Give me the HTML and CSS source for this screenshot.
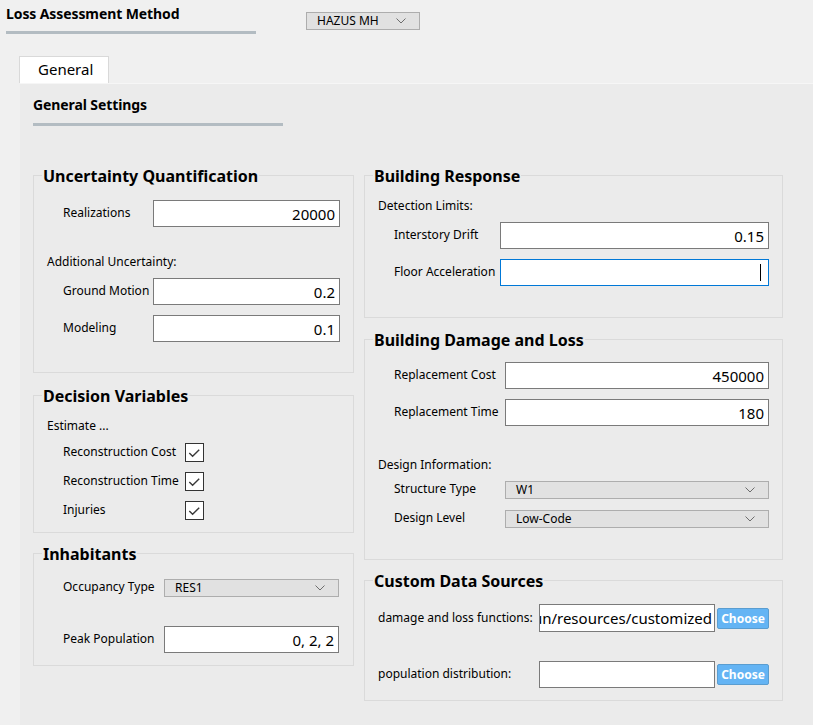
FILE: index.html
```html
<!DOCTYPE html>
<html lang="en">
<head>
<meta charset="utf-8">
<title>Loss Assessment</title>
<link rel="stylesheet" href="styles.css">
</head>
<body>
<div class="app">
  <div class="top">
    <div class="method">
      <div class="heading">Loss Assessment Method</div>
      <div class="bar"></div>
    </div>
    <div class="combo combo-method"><span>HAZUS MH</span><svg class="chev" width="10" height="6" viewBox="0 0 10 6"><polyline points="0.5,0.5 5,5 9.5,0.5" fill="none" stroke="#6d6d6d" stroke-width="1"/></svg></div>
  </div>
  <div class="tabs"><div class="tab">General</div></div>
  <div class="panel">
    <div class="heading">General Settings</div>
    <div class="bar"></div>
    <div class="columns">
      <div class="col col-left">
        <div class="group g-uq">
          <div class="group-title">Uncertainty Quantification</div>
          <div class="row r1"><span class="label w90">Realizations</span><div class="field w187">20000</div></div>
          <div class="sub s-add">Additional Uncertainty:</div>
          <div class="row r2"><span class="label w90">Ground Motion</span><div class="field w187">0.2</div></div>
          <div class="row r3"><span class="label w90">Modeling</span><div class="field w187">0.1</div></div>
        </div>
        <div class="group g-dv">
          <div class="group-title">Decision Variables</div>
          <div class="sub s-est">Estimate ...</div>
          <div class="row c1"><span class="label w122">Reconstruction Cost</span><span class="check"><svg width="18" height="18" viewBox="0 0 18 18"><polyline points="3.5,9 7,12.5 14,5.5" fill="none" stroke="#3a3a3a" stroke-width="1.5"/></svg></span></div>
          <div class="row c2"><span class="label w122">Reconstruction Time</span><span class="check"><svg width="18" height="18" viewBox="0 0 18 18"><polyline points="3.5,9 7,12.5 14,5.5" fill="none" stroke="#3a3a3a" stroke-width="1.5"/></svg></span></div>
          <div class="row c3"><span class="label w122">Injuries</span><span class="check"><svg width="18" height="18" viewBox="0 0 18 18"><polyline points="3.5,9 7,12.5 14,5.5" fill="none" stroke="#3a3a3a" stroke-width="1.5"/></svg></span></div>
        </div>
        <div class="group g-inh">
          <div class="group-title">Inhabitants</div>
          <div class="row i1"><span class="label w101">Occupancy Type</span><div class="combo w175"><span>RES1</span><svg class="chev" width="10" height="6" viewBox="0 0 10 6"><polyline points="0.5,0.5 5,5 9.5,0.5" fill="none" stroke="#6d6d6d" stroke-width="1"/></svg></div></div>
          <div class="row i2"><span class="label w101">Peak Population</span><div class="field w175">0, 2, 2</div></div>
        </div>
      </div>
      <div class="col col-right">
        <div class="group g-br">
          <div class="group-title">Building Response</div>
          <div class="sub s-det">Detection Limits:</div>
          <div class="row b1"><span class="label w106">Interstory Drift</span><div class="field w269">0.15</div></div>
          <div class="row b2"><span class="label w106">Floor Acceleration</span><div class="field w269 focus"><span class="caret"></span></div></div>
        </div>
        <div class="group g-bdl">
          <div class="group-title">Building Damage and Loss</div>
          <div class="row d1"><span class="label w111">Replacement Cost</span><div class="field w264">450000</div></div>
          <div class="row d2"><span class="label w111">Replacement Time</span><div class="field w264">180</div></div>
          <div class="sub s-des">Design Information:</div>
          <div class="row d3"><span class="label w111">Structure Type</span><div class="combo w264"><span>W1</span><svg class="chev" width="10" height="6" viewBox="0 0 10 6"><polyline points="0.5,0.5 5,5 9.5,0.5" fill="none" stroke="#6d6d6d" stroke-width="1"/></svg></div></div>
          <div class="row d4"><span class="label w111">Design Level</span><div class="combo w264"><span>Low-Code</span><svg class="chev" width="10" height="6" viewBox="0 0 10 6"><polyline points="0.5,0.5 5,5 9.5,0.5" fill="none" stroke="#6d6d6d" stroke-width="1"/></svg></div></div>
        </div>
        <div class="group g-cds">
          <div class="group-title">Custom Data Sources</div>
          <div class="row k1"><span class="label w161 flat">damage and loss functions:</span><div class="field w176 path"><span class="path-text">/pelicun/resources/customized</span></div><button class="choose">Choose</button></div>
          <div class="row k2"><span class="label w161 flat">population distribution:</span><div class="field w176"></div><button class="choose">Choose</button></div>
        </div>
      </div>
    </div>
  </div>
</div>
</body>
</html>
```

FILE: styles.css
```css
* { box-sizing: border-box; }
html, body { margin: 0; padding: 0; }
body {
  background: #f0f0f0;
  font-family: "Noto Sans", "Open Sans", "DejaVu Sans", sans-serif;
  font-size: 12px;
  color: #000;
  overflow: hidden;
}
.app { height: 100vh; display: flex; flex-direction: column; }

.top { display: flex; align-items: flex-start; padding-left: 6px; }
.method { width: 250px; padding-top: 6px; }
.heading { font-weight: 700; font-size: 14px; letter-spacing: -0.1px; line-height: 16px; color: #000; }
.bar { height: 3px; background: #b3bcc2; width: 250px; margin-top: 9px; }

.combo {
  display: flex; align-items: center; justify-content: space-between;
  height: 18px; background: #e1e1e1; border: 1px solid #adadad;
  padding: 0 13px 0 10px; font-size: 12px; line-height: 16px;
}
.combo-method { width: 114px; margin: 12px 0 0 50px; }
.chev { display: block; flex: none; }

.tabs { display: flex; padding-left: 19px; margin-top: 22px; }
.tab {
  width: 90px; height: 27px; background: #fff;
  border: 1px solid #d9d9d9; border-bottom: none;
  font-size: 15px; line-height: 25px; padding-left: 18px;
}
.panel {
  flex: 1; margin-left: 20px; background: #ebebeb;
  border-top: 1px solid #f6f6f6; padding: 13px 0 0 13px;
}
.panel .bar { margin-top: 10px; }

.columns { display: flex; align-items: flex-start; gap: 10px; margin-top: 49px; }
.col { display: flex; flex-direction: column; }
.col-left { width: 321px; }
.col-right { width: 419px; }

.group { border: 1px solid #dadada; }
.group-title {
  width: max-content; margin: -11px 0 0 8px; padding: 2px 1px 0;
  background: #ebebeb; font-weight: 700; font-size: 16px; line-height: 18px;
}
.g-dv { margin-top: 22px; }
.g-inh { margin-top: 20px; }
.g-bdl { margin-top: 21px; }
.g-cds { margin-top: 20px; }

.row { display: flex; align-items: center; padding-left: 29px; }
.label { flex: none; font-size: 12px; line-height: 16px; margin-top: -2px; }
.label.flat { margin-top: -1px; }
.sub { font-size: 12px; line-height: 16px; padding-left: 13px; }

.w90 { width: 90px; } .w101 { width: 101px; } .w106 { width: 106px; }
.w111 { width: 111px; } .w122 { width: 122px; } .w161 { width: 161px; }
.w187 { width: 187px; } .w175 { width: 175px; } .w269 { width: 269px; }
.w264 { width: 264px; } .w176 { width: 176px; }

.field {
  flex: none; height: 27px; background: #fff; border: 1px solid #7a7a7a;
  font-size: 15px; line-height: 26px; text-align: right; padding: 0 4px 0 3px;
  white-space: nowrap; overflow: hidden;
}
.field.focus { border-color: #0078d7; display: flex; justify-content: flex-end; align-items: center; }
.caret { display: block; width: 1px; height: 17px; background: #000; margin-right: 3px; }
.field.path { display: flex; justify-content: flex-end; padding-right: 2px; height: 28px; line-height: 27px; }
.path-text { flex: none; }

.check {
  flex: none; width: 19px; height: 19px; border: 1px solid #333; background: #fff;
  display: flex; align-items: center; justify-content: center;
}
.check svg { display: block; }

.choose {
  flex: none; margin-left: 2px; width: 52px; height: 21px; padding: 0;
  background: #64b4f4; border: 1px solid #5a9dd0; border-radius: 2px;
  color: #fff; font-family: inherit; font-weight: 700; font-size: 12px; line-height: 17px;
}

/* Uncertainty */
.g-uq .r1 { margin-top: 15px; }
.s-add { margin-top: 27px; }
.g-uq .r2 { margin-top: 8px; }
.g-uq .r3 { margin-top: 10px; }
.g-uq { padding-bottom: 30px; }

/* Decision */
.s-est { margin-top: 13px; }
.g-dv .c1 { margin-top: 9px; }
.g-dv .c2, .g-dv .c3 { margin-top: 10px; }
.g-dv { padding-bottom: 12px; }

/* Inhabitants */
.g-inh .i1 { margin-top: 16px; }
.g-inh .i2 { margin-top: 29px; }
.g-inh { padding-bottom: 12px; }

/* Building response */
.s-det { margin-top: 13px; }
.g-br .b1 { margin-top: 8px; }
.g-br .b2 { margin-top: 10px; }
.g-br { padding-bottom: 31px; }

/* Damage and loss */
.g-bdl .d1 { margin-top: 13px; }
.g-bdl .d2 { margin-top: 10px; }
.s-des { margin-top: 31px; }
.g-bdl .d3 { margin-top: 8px; }
.g-bdl .d4 { margin-top: 11px; }
.g-bdl { padding-bottom: 31px; }

/* Custom data */
.g-cds .row { padding-left: 13px; }
.g-cds .k1 { margin-top: 14px; }
.g-cds .k2 { margin-top: 29px; }
.g-cds { padding-bottom: 12px; }
```
